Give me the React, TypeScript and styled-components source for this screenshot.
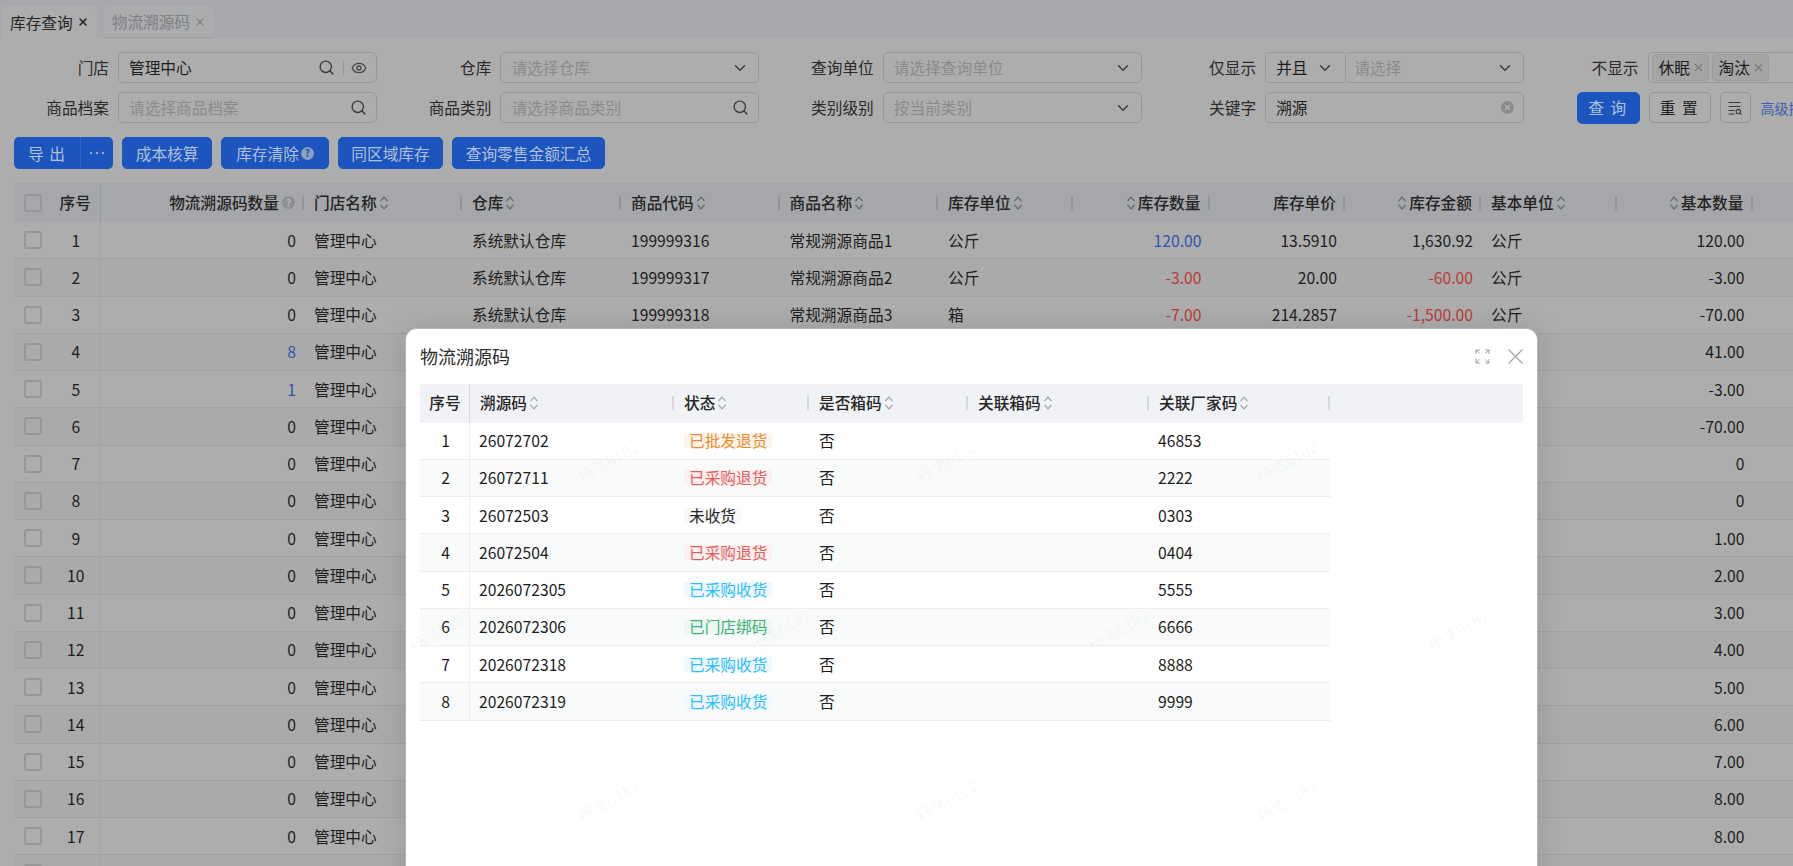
import React from 'react';
import styled, { createGlobalStyle } from 'styled-components';
import { Search, Eye, ChevronDown, X } from 'lucide-react';

const Global = createGlobalStyle`
  html, body { margin: 0; padding: 0; background: #adadad; }
  body { font-family: "Noto Sans CJK SC", "Noto Sans", sans-serif; font-size: 15.7px; color: #1d1d1d; overflow: hidden; }
  * { box-sizing: border-box; }
`;

const Page = styled.div`
  position: relative; width: 1793px; height: 866px; overflow: hidden; background: #adadad;
`;
const TabBar = styled.div`
  height: 38px; background: #a6a8ab; display: flex; align-items: flex-end; padding-left: 2px; gap: 7px;
`;
const Tab = styled.div<{ $active?: boolean }>`
  height: 32px; display: flex; align-items: center; gap: 4px; padding: 0 8px;
  border-radius: 5px 5px 0 0; font-size: 15.7px;
  background: ${p => (p.$active ? '#adadad' : '#aaacae')};
  color: ${p => (p.$active ? '#262626' : '#7f8082')};
  border-bottom: ${p => (p.$active ? 'none' : '1px solid #9d9ea0')};
`;
const TabClose = styled.span<{ $active?: boolean }>`
  display: inline-flex; color: ${p => (p.$active ? '#222' : '#858688')};
`;
const FilterArea = styled.div`
  display: flex; flex-direction: column; gap: 9px; padding: 14px 0 0 5px;
`;
const FilterRow = styled.div`
  display: flex; height: 31px;
`;
const Field = styled.div<{ $wide?: boolean }>`
  width: ${p => (p.$wide ? '352px' : '382.4px')}; flex: none; display: flex; align-items: center; padding-right: ${p => (p.$wide ? 0 : 10.4)}px;
`;
const Label = styled.label`
  width: 104px; flex: none; text-align: right; margin-right: 9px; color: #2a2a2a; line-height: 31px;
`;
const InputBox = styled.div`
  flex: 1; min-width: 0; height: 31px; display: flex; align-items: center; padding: 0 9px 0 10px;
  border: 1px solid #989898; border-radius: 5px; color: #1d1d1d; line-height: 1;
`;
const Placeholder = styled.span`
  color: #8b8b8b; flex: 1; white-space: nowrap;
`;
const Value = styled.span`
  flex: 1; white-space: nowrap;
`;
const IconDivider = styled.span`
  width: 1px; height: 16px; background: #979797; margin: 0 7px 0 8px;
`;
const ClearDot = styled.span`
  width: 13px; height: 13px; border-radius: 50%; background: #8c8c8c; color: #b5b5b5;
  display: inline-flex; align-items: center; justify-content: center;
`;
const ComboPrefix = styled.div`
  width: 80px; flex: none; height: 31px; display: flex; align-items: center; justify-content: space-between;
  padding: 0 11px 0 10px; border: 1px solid #989898; border-right: none; border-radius: 5px 0 0 5px;
`;
const ComboBox = styled(InputBox)`
  border-radius: 5px; padding-left: 8px;
`;
const TagBox = styled.div`
  flex: none; width: 200px; height: 31px; display: flex; align-items: center; gap: 3px; padding-left: 3px;
  border: 1px solid #989898; border-radius: 5px 0 0 5px; border-right: none;
`;
const TagChip = styled.span`
  height: 27px; width: 57px; display: inline-flex; align-items: center; gap: 2px; padding-left: 6px;
  background: #a5a5a5; border: 1px solid #9c9c9c; border-radius: 4px; color: #1d1d1d; white-space: nowrap;
`;
const ButtonGroup = styled.div`
  display: flex; align-items: center; gap: 9px; padding-left: 42px; flex: none;
`;
const PrimaryBtn = styled.button<{ $w: number; $spaced?: boolean }>`
  height: 32px; width: ${p => p.$w}px; border: 1px solid #1a56bd; background: #1b55bd; color: #b3c0d9;
  border-radius: 5px; font: inherit; padding: 0; display: inline-flex; align-items: center; justify-content: center; gap: 1px;
  letter-spacing: ${p => (p.$spaced ? '1.5px' : '0')};
`;
const GhostBtn = styled.button<{ $w: number; $spaced?: boolean }>`
  height: 31px; width: ${p => p.$w}px; border: 1px solid #939393; background: transparent; color: #1f1f1f;
  border-radius: 5px; font: inherit; padding: 0; display: inline-flex; align-items: center; justify-content: center;
  letter-spacing: ${p => (p.$spaced ? '1.5px' : '0')};
`;
const AdvLink = styled.span`
  color: #3c5fb6; font-size: 14px; white-space: nowrap; margin-left: 1px;
`;
const ActionBar = styled.div`
  display: flex; gap: 9px; padding-left: 14px; margin-top: 14px; height: 32px;
`;
const SplitBtn = styled.div`
  display: flex; flex: none; width: 99px; height: 32px; background: #1b55bd; border-radius: 5px; color: #b3c0d9; overflow: hidden;
`;
const SplitMain = styled.span`
  flex: none; width: 67px; display: flex; align-items: center; justify-content: center; border-right: 1px solid #2f66c4; letter-spacing: 1px; white-space: nowrap;
`;
const SplitMore = styled.span`
  flex: 1; display: flex; align-items: center; justify-content: center;
`;
const HelpDot = styled.span<{ $bg: string; $fg: string }>`
  width: 13px; height: 13px; border-radius: 50%; background: ${p => p.$bg}; color: ${p => p.$fg}; margin-left: 1px;
  display: inline-flex; align-items: center; justify-content: center; font-size: 10px; font-weight: 700; line-height: 1; flex: none;
`;
const mainCols = '36px 50.5px 203.5px 158px 159px 158.5px 158.5px 135px 136.5px 135.5px 136px 136px 135.5px 40.5px';
const MainTable = styled.div`
  margin: 14px 0 0 14px; width: 1779px;
`;
const MainHead = styled.div`
  display: grid; grid-template-columns: ${mainCols}; height: 39px; background: #a5a7aa;
`;
const MainRow = styled.div<{ $odd: boolean }>`
  display: grid; grid-template-columns: ${mainCols}; height: 37.25px;
  background: ${p => (p.$odd ? '#adadad' : '#a9aaa9')}; border-bottom: 1px solid #a1a1a1;
`;
const HeadCell = styled.div<{ $align?: string; $line?: string; $divider?: string }>`
  position: relative; display: flex; align-items: center; gap: 2px; padding: 0 9px 0 10px; font-weight: 500; color: #242424; white-space: nowrap;
  justify-content: ${p => (p.$align === 'right' ? 'flex-end' : p.$align === 'center' ? 'center' : 'flex-start')};
  ${p => (p.$line ? `border-right: 1px solid ${p.$line};` : '')}
  ${p => (!p.$line ? `&::after { content: ""; position: absolute; right: 0; top: 50%; height: 14px; margin-top: -7px; width: 2px; background: ${p.$divider || '#929497'}; }` : '')}
`;
const Cell = styled.div<{ $align?: string; $color?: string; $line?: string; $pl?: number }>`
  display: flex; align-items: center; padding: 0 8px 0 ${p => p.$pl ?? 10}px; white-space: nowrap;
  color: ${p => p.$color || '#1d1d1d'};
  justify-content: ${p => (p.$align === 'right' ? 'flex-end' : p.$align === 'center' ? 'center' : 'flex-start')};
  ${p => (p.$line ? `border-right: 1px solid ${p.$line};` : '')}
`;
const Check = styled.span`
  width: 18px; height: 18px; border: 2px solid #979797; border-radius: 3px; margin-left: 10px; flex: none;
`;
const CheckCell = styled.div`
  display: flex; align-items: center; position: relative;
`;
const Modal = styled.div`
  position: absolute; left: 406px; top: 329px; width: 1131px; height: 570px; background: #fff; border-radius: 11px 11px 0 0;
  padding: 0 14px; box-shadow: 0 0 30px rgba(0,0,0,.12), 0 0 0 1px rgba(255,255,255,.25);
`;
const ModalHeader = styled.div`
  height: 54.5px; display: flex; align-items: center; justify-content: space-between; font-size: 18px; color: #2b2b2b;
`;
const ModalTools = styled.div`
  display: flex; align-items: center; gap: 18px;
`;
const modalCols = '50px 204px 135px 159px 181px 181px';
const SubHead = styled.div`
  display: grid; grid-template-columns: ${modalCols} 1fr; height: 39px; background: #f1f2f5;
  & > div { padding-bottom: 1px; }
`;
const SubRow = styled.div<{ $odd: boolean }>`
  display: grid; grid-template-columns: ${modalCols}; width: 910px; height: 37.25px;
  background: ${p => (p.$odd ? '#fff' : '#f9fbfa')}; border-bottom: 1px solid #ebedee;
`;
const Badge = styled.span<{ $fg: string; $bg: string }>`
  display: inline-block; line-height: 15px; height: 15px; padding: 0 5px; color: ${p => p.$fg}; background: ${p => p.$bg}; white-space: nowrap;
`;
const Watermark = styled.span<{ $x: number; $y: number; $faint: boolean }>`
  position: absolute; left: ${p => p.$x}px; top: ${p => p.$y}px; transform: translate(-50%, -50%) rotate(-30deg);
  font-size: 16px; color: rgba(0,0,0,${p => (p.$faint ? 0.012 : 0.04)}); white-space: nowrap; pointer-events: none;
`;

const SortIcon = () => (
  <svg width="10" height="16" viewBox="0 0 10 16" fill="none" stroke="#656769" strokeWidth="1.2" style={{ flex: 'none' }}>
    <path d="M1.5 6 5 2.2 8.5 6" /><path d="M1.5 10 5 13.8 8.5 10" />
  </svg>
);
const LightSort = () => (
  <svg width="10" height="16" viewBox="0 0 10 16" fill="none" stroke="#a3a7ac" strokeWidth="1.2" style={{ flex: 'none' }}>
    <path d="M1.5 6 5 2.2 8.5 6" /><path d="M1.5 10 5 13.8 8.5 10" />
  </svg>
);
const FilterGlyph = () => (
  <svg width="16" height="16" viewBox="0 0 16 16" fill="none" stroke="#3a3a3a" strokeWidth="1.1">
    <path d="M1.5 2.5h12M1.5 6.5h12M1.5 10.5h6M1.5 14h6" />
    <circle cx="11.3" cy="11.6" r="2.2" /><path d="m13 13.3 1.6 1.4" />
  </svg>
);
const ExpandGlyph = () => (
  <svg width="15" height="15" viewBox="0 0 15 15" fill="none" stroke="#9ba0a6" strokeWidth="1">
    <path d="M1 5V1h4M1 1l3.5 3.5M14 5V1h-4M14 1l-3.5 3.5M1 10v4h4M1 14l3.5-3.5M14 10v4h-4M14 14l-3.5-3.5" />
  </svg>
);
const CloseGlyph = () => (
  <svg width="15" height="15" viewBox="0 0 15 15" fill="none" stroke="#a0a4a9" strokeWidth="1.1">
    <path d="M.5.5l14 14M14.5.5l-14 14" />
  </svg>
);
const MoreGlyph = () => (
  <svg width="16" height="4" viewBox="0 0 16 4" fill="#93a8d2">
    <circle cx="2" cy="2" r="1.2" /><circle cx="8" cy="2" r="1.2" /><circle cx="14" cy="2" r="1.2" />
  </svg>
);

type Col = { t: string; a?: string; sort?: 'l' | 'r'; help?: boolean };
const heads: Col[] = [
  { t: '物流溯源码数量', a: 'right', help: true },
  { t: '门店名称', sort: 'r' }, { t: '仓库', sort: 'r' }, { t: '商品代码', sort: 'r' }, { t: '商品名称', sort: 'r' }, { t: '库存单位', sort: 'r' },
  { t: '库存数量', a: 'right', sort: 'l' }, { t: '库存单价', a: 'right' }, { t: '库存金额', a: 'right', sort: 'l' },
  { t: '基本单位', sort: 'r' }, { t: '基本数量', a: 'right', sort: 'l' },
];
const BLUE = '#2f55b4'; const RED = '#b83b3b';
const base = ['120.00','-3.00','-70.00','41.00','-3.00','-70.00','0','0','1.00','2.00','3.00','4.00','5.00','6.00','7.00','8.00','8.00','9.00'];
const counts: Record<number, string> = { 3: '8', 4: '1' };
const first3 = [
  { u: '公斤', q: '120.00', qc: BLUE, p: '13.5910', m: '1,630.92', mc: undefined },
  { u: '公斤', q: '-3.00', qc: RED, p: '20.00', m: '-60.00', mc: RED },
  { u: '箱', q: '-7.00', qc: RED, p: '214.2857', m: '-1,500.00', mc: RED },
];

const subRows = [
  ['26072702', '已批发退货', '#f08a2c', '#fdf5ed', '46853'],
  ['26072711', '已采购退货', '#e25f5f', '#fcefed', '2222'],
  ['26072503', '未收货', '#262626', '#f8f8f8', '0303'],
  ['26072504', '已采购退货', '#e25f5f', '#fcefed', '0404'],
  ['2026072305', '已采购收货', '#2dbcff', '#f0f9ff', '5555'],
  ['2026072306', '已门店绑码', '#3ab27a', '#eef6f1', '6666'],
  ['2026072318', '已采购收货', '#2dbcff', '#f0f9ff', '8888'],
  ['2026072319', '已采购收货', '#2dbcff', '#f0f9ff', '9999'],
];
const subHeads = ['溯源码', '状态', '是否箱码', '关联箱码', '关联厂家码'];
const marks: [number, number, boolean][] = [
  [268,122,true],[608,122,true],[947,122,true],[1287,122,true],[1628,122,true],
  [100,292,true],[440,292,true],[780,292,true],[1118,292,true],[1458,292,true],
  [268,461,true],[608,461,false],[947,461,false],[1287,461,false],[1628,461,true],
  [100,630,true],[440,630,false],[780,630,false],[1118,630,false],[1458,630,false],
  [268,800,true],[608,800,false],[947,800,false],[1287,800,false],[1628,800,true],
];

export default function App() {
  const chev = <ChevronDown size={18} color="#3d3d3d" />;
  const search = <Search size={17} color="#3d3d3d" />;
  return (
    <Page>
      <Global />
      <TabBar>
        <Tab $active>库存查询<TabClose $active><X size={12} strokeWidth={3} /></TabClose></Tab>
        <Tab>物流溯源码<TabClose><X size={12} strokeWidth={2.4} /></TabClose></Tab>
      </TabBar>

      <FilterArea>
        <FilterRow>
          <Field><Label>门店</Label><InputBox><Value>管理中心</Value>{search}<IconDivider /><Eye size={16} color="#4a4a4a" /></InputBox></Field>
          <Field><Label>仓库</Label><InputBox><Placeholder>请选择仓库</Placeholder>{chev}</InputBox></Field>
          <Field><Label>查询单位</Label><InputBox><Placeholder>请选择查询单位</Placeholder>{chev}</InputBox></Field>
          <Field><Label>仅显示</Label><ComboPrefix>并且{chev}</ComboPrefix><ComboBox><Placeholder>请选择</Placeholder>{chev}</ComboBox></Field>
          <Field $wide><Label>不显示</Label><TagBox><TagChip>休眠<X size={13} color="#777" /></TagChip><TagChip>淘汰<X size={13} color="#777" /></TagChip></TagBox></Field>
        </FilterRow>
        <FilterRow>
          <Field><Label>商品档案</Label><InputBox><Placeholder>请选择商品档案</Placeholder>{search}</InputBox></Field>
          <Field><Label>商品类别</Label><InputBox><Placeholder>请选择商品类别</Placeholder>{search}</InputBox></Field>
          <Field><Label>类别级别</Label><InputBox><Placeholder>按当前类别</Placeholder>{chev}</InputBox></Field>
          <Field><Label>关键字</Label><InputBox><Value>溯源</Value><ClearDot><X size={9} strokeWidth={3} /></ClearDot></InputBox></Field>
          <ButtonGroup>
            <PrimaryBtn $w={63} $spaced>查 询</PrimaryBtn>
            <GhostBtn $w={62} $spaced>重 置</GhostBtn>
            <GhostBtn $w={31}><FilterGlyph /></GhostBtn>
            <AdvLink>高级搜索</AdvLink>
          </ButtonGroup>
        </FilterRow>
      </FilterArea>

      <ActionBar>
        <SplitBtn><SplitMain>导 出</SplitMain><SplitMore><MoreGlyph /></SplitMore></SplitBtn>
        <PrimaryBtn $w={90}>成本核算</PrimaryBtn>
        <PrimaryBtn $w={108}>库存清除<HelpDot $bg="#8f9fbf" $fg="#1b55bd">?</HelpDot></PrimaryBtn>
        <PrimaryBtn $w={105}>同区域库存</PrimaryBtn>
        <PrimaryBtn $w={153}>查询零售金额汇总</PrimaryBtn>
      </ActionBar>

      <MainTable>
        <MainHead>
          <CheckCell><Check /></CheckCell>
          <HeadCell $align="center" $line="#979a9e">序号</HeadCell>
          {heads.map(h => (
            <HeadCell key={h.t} $align={h.a}>
              {h.sort === 'l' && <SortIcon />}
              {h.t}
              {h.help && <HelpDot $bg="#8d8f92" $fg="#b5b7ba">?</HelpDot>}
              {h.sort === 'r' && <SortIcon />}
            </HeadCell>
          ))}
          <div />
        </MainHead>
        {base.map((b, i) => {
          const f = first3[i] || { u: '公斤', q: b, qc: undefined, p: '1.0000', m: b, mc: undefined };
          return (
            <MainRow key={i} $odd={i % 2 === 0}>
              <CheckCell><Check /></CheckCell>
              <Cell $align="center" $line="#a4a4a4">{i + 1}</Cell>
              <Cell $align="right" $color={counts[i] ? BLUE : undefined}>{counts[i] || '0'}</Cell>
              <Cell>管理中心</Cell>
              <Cell>系统默认仓库</Cell>
              <Cell>{199999316 + i}</Cell>
              <Cell>常规溯源商品{i + 1}</Cell>
              <Cell>{f.u}</Cell>
              <Cell $align="right" $color={f.qc}>{f.q}</Cell>
              <Cell $align="right">{f.p}</Cell>
              <Cell $align="right" $color={f.mc}>{f.m}</Cell>
              <Cell>公斤</Cell>
              <Cell $align="right">{b}</Cell>
              <div />
            </MainRow>
          );
        })}
      </MainTable>

      <Modal>
        <ModalHeader>
          物流溯源码
          <ModalTools><ExpandGlyph /><CloseGlyph /></ModalTools>
        </ModalHeader>
        <SubHead>
          <HeadCell $align="center" $line="#d8dade">序号</HeadCell>
          {subHeads.map(h => <HeadCell key={h} $divider="#d5d8dc">{h}<LightSort /></HeadCell>)}
          <div />
        </SubHead>
        {subRows.map((r, i) => (
          <SubRow key={r[0]} $odd={i % 2 === 0}>
            <Cell $align="center" $line="#eceef0">{i + 1}</Cell>
            <Cell $pl={9}>{r[0]}</Cell>
            <Cell><Badge $fg={r[2]} $bg={r[3]}>{r[1]}</Badge></Cell>
            <Cell>否</Cell>
            <Cell />
            <Cell $pl={9}>{r[4]}</Cell>
          </SubRow>
        ))}
      </Modal>
      {marks.map(([x, y, faint]) => <Watermark key={`${x}-${y}`} $x={x} $y={y} $faint={faint}>杨浩6182</Watermark>)}
    </Page>
  );
}
